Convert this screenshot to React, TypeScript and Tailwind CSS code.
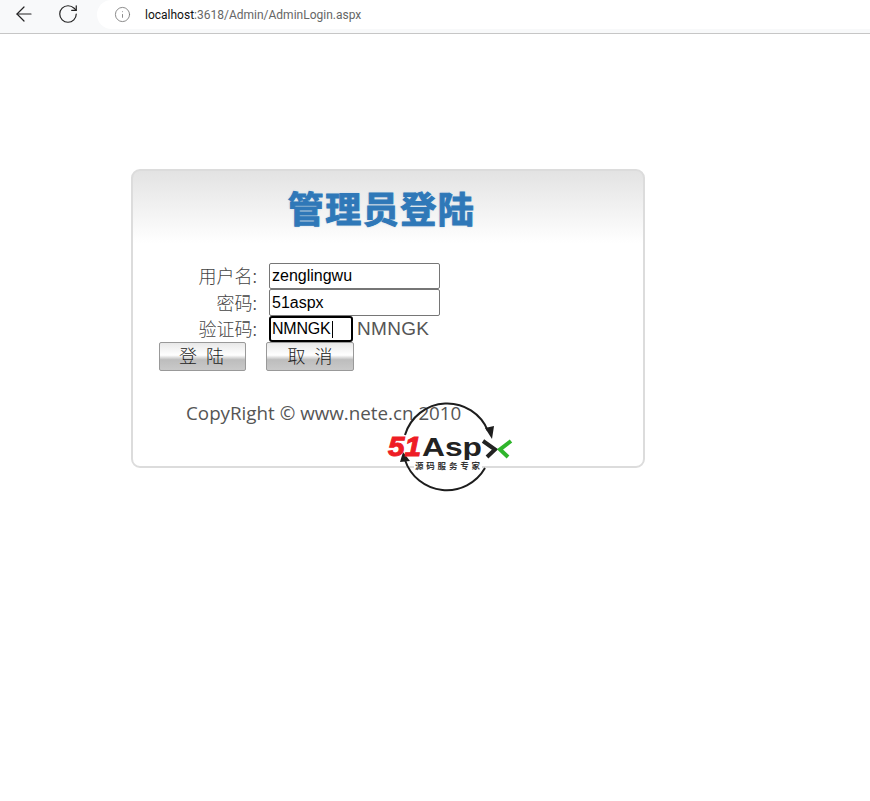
import { ArrowLeft, RotateCw, Info } from "lucide-react";

function Logo() {
  return (
    <svg width="126" height="92" viewBox="0 0 126 92" className="absolute left-[255px] top-[233px] overflow-visible">
      <path d="M17 31 A44 44 0 0 1 100 27" fill="none" stroke="#1d1d1d" strokeWidth="2" />
      <path d="M97 24 L106 22 L104 35 Z" fill="#1d1d1d" />
      <path d="M97 64 A44 44 0 0 1 17 56" fill="none" stroke="#1d1d1d" strokeWidth="2" />
      <path d="M12 58 L22 57 L15 48 Z" fill="#1d1d1d" />
      <text x="0" y="52" fontFamily="Liberation Sans" fontWeight="700" fontStyle="italic" fontSize="27" fill="#ee1c25" stroke="#ee1c25" strokeWidth="1" textLength="33" lengthAdjust="spacingAndGlyphs">51</text>
      <text x="34" y="52" fontFamily="Liberation Sans" fontWeight="700" fontSize="26" fill="#222" textLength="60" lengthAdjust="spacingAndGlyphs">Asp</text>
      <path d="M95 37 L107 45.5 L99 53" fill="none" stroke="#222" strokeWidth="4" />
      <path d="M123 37 L112 45.5 L120 53" fill="none" stroke="#2fb52c" strokeWidth="4" />
      <rect x="26" y="56" width="68" height="11" fill="#ffffff" />
      <text x="27" y="65" fontFamily="'Noto Sans CJK SC', sans-serif" fontWeight="700" fontSize="8.5" fill="#333" textLength="65">源码服务专家</text>
    </svg>
  );
}

export default function App() {
  return (
    <div className="min-h-[801px] bg-white font-['Liberation_Sans',sans-serif]">
      <div className="flex h-[34px] items-start overflow-hidden border-b border-[#c6c6c6] bg-[#f8f9fa]">
        <ArrowLeft className="ml-[12px] mt-[2px] size-[24px] text-[#222]" strokeWidth={1.2} />
        <RotateCw className="ml-[21px] mt-[3px] size-[22px] text-[#222]" strokeWidth={1.3} />
        <div className="ml-[18px] flex h-[29px] flex-1 items-center rounded-l-full bg-white pl-[17px]">
          <Info className="size-[17px] text-[#777]" strokeWidth={1.2} />
          <span className="ml-[14px] font-['Roboto',sans-serif] text-[12px] text-[#666]">
            <span className="text-[#111]">localhost</span>:3618/Admin/AdminLogin.aspx
          </span>
        </div>
      </div>
      <div className="relative ml-[131px] mt-[135px] h-[299px] w-[514px] rounded-[9px] border-2 border-[#dcdcdc] bg-[linear-gradient(#e3e3e3,#ffffff_72px)]">
        <div className="flex h-[76px] items-center justify-center pb-[4px] pr-[13px]">
          <h1 className="whitespace-nowrap font-['Noto_Sans_CJK_SC',sans-serif] text-[36px] leading-none font-bold tracking-[1.5px] text-[#2f78b8] [-webkit-text-stroke:1px_#2f78b8] [text-shadow:0_0_3px_#d4e0ea,0_0_2px_#d4e0ea,0_0_2px_#d4e0ea]">
            管理员登陆
          </h1>
        </div>
        <div className="mt-[16px] grid grid-cols-[124px_auto] grid-rows-[26px_27px_26px] items-center gap-x-[12px] text-[#555]">
          <label className="pb-[2px] text-right font-['Noto_Sans_CJK_SC',sans-serif] text-[18px] leading-[24px] font-light text-[#444]">用户名:</label>
          <input readOnly value="zenglingwu" className="h-[26px] w-[171px] rounded-[2px] border border-[#767676] px-[2px] text-[16px] text-black outline-none" />
          <label className="pb-[2px] text-right font-['Noto_Sans_CJK_SC',sans-serif] text-[18px] leading-[24px] font-light text-[#444]">密码:</label>
          <input readOnly value="51aspx" className="h-[27px] w-[171px] rounded-[2px] border border-[#767676] px-[2px] text-[16px] text-black outline-none" />
          <label className="pb-[2px] text-right font-['Noto_Sans_CJK_SC',sans-serif] text-[18px] leading-[24px] font-light text-[#444]">验证码:</label>
          <div className="flex h-[26px] items-center">
            <div className="flex h-[26px] w-[84px] items-center rounded-[3px] border-2 border-black px-[1px] text-[16px] tracking-[-0.2px] text-black">
              NMNGK<span className="ml-px h-[17px] w-px bg-black" />
            </div>
            <span className="ml-[4px] text-[19px] tracking-[0.3px] text-[#555]">NMNGK</span>
          </div>
        </div>
        <div className="ml-[26px] flex gap-[20px]">
          <button className="h-[29px] w-[87px] rounded-[2px] border border-[#999] bg-[linear-gradient(#e8e8e8_0%,#ffffff_45%,#bdbdbd_62%,#c9c9c9_100%)] pb-[3px] pl-[7px] font-['Noto_Sans_CJK_SC',sans-serif] text-[18px] leading-none font-light tracking-[9px] text-[#222]">
            登陆
          </button>
          <button className="h-[29px] w-[88px] rounded-[2px] border border-[#999] bg-[linear-gradient(#e8e8e8_0%,#ffffff_45%,#bdbdbd_62%,#c9c9c9_100%)] pb-[3px] pl-[9px] font-['Noto_Sans_CJK_SC',sans-serif] text-[18px] leading-none font-light tracking-[9px] text-[#222]">
            取消
          </button>
        </div>
        <p className="ml-[53px] mt-[29px] whitespace-nowrap font-['Open_Sans',sans-serif] text-[18.8px] leading-[26px] text-[#555]">
          CopyRight © www.nete.cn 2010
        </p>
        <Logo />
      </div>
    </div>
  );
}
